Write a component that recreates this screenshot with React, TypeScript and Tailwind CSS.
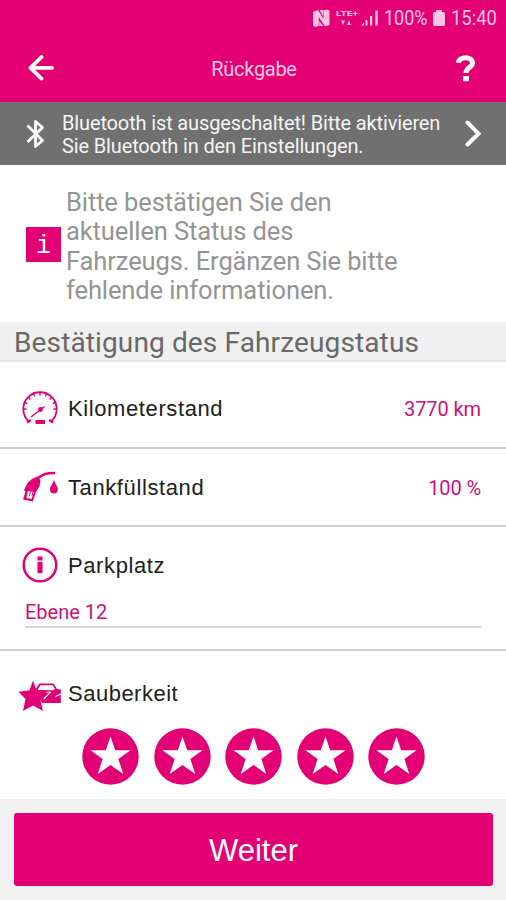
import React from 'react';

const STAR = 'M0 -20 L4.7 -6.3 L20 -6.3 L7.9 2.6 L12.8 17.5 L0 8.4 L-12.8 17.5 L-7.9 2.6 L-20 -6.3 L-4.7 -6.3 Z';

const StatusBar = () => (
  <div className="flex h-9 items-center pl-[312px] text-[#ffc4e2]">
    <svg className="h-9 w-[72px] shrink-0" viewBox="312 0 72 36" fill="currentColor">
      <path d="M313 12 L318 10 L323.5 19 V11 L327 9.5 L329.5 10.5 V25 L325 26.5 L318.7 17 V26 L315 27 L313 25.5 Z" />
      <path d="M319.5 10 H325 L323 11.5 V16 Z M319.2 21 L323.2 26 H319.2 Z" />
      <text x="336" y="15.5" fontSize="8" fontWeight="700" fontFamily="Roboto, sans-serif" textLength="22" lengthAdjust="spacingAndGlyphs">LTE+</text>
      <path d="M341 20.5 h4 l-2 4.5z M347 25 h4 l-2 -4.5z" />
      <path d="M361 25.5 L364 22.5 V25.5 Z M365.5 20 h2 v5.5 h-2z M370 16 h2.2 v9.5 h-2.2z M375.3 10.5 h2.5 v15 h-2.5z" />
    </svg>
    <span className="w-[49px] text-[20px] whitespace-nowrap"><span className="inline-block origin-left scale-x-[0.9]">100%</span></span>
    <svg className="h-9 w-3 shrink-0" viewBox="0 0 12 36" fill="currentColor">
      <path d="M3 10 H9 V12 H10.5 Q12 12 12 13.5 V24.5 Q12 26 10.5 26 H1.5 Q0 26 0 24.5 V13.5 Q0 12 1.5 12 H3 Z" />
    </svg>
    <span className="ml-[6px] text-[20px] whitespace-nowrap"><span className="inline-block origin-left scale-x-[0.92]">15:40</span></span>
  </div>
);

const GaugeIcon = () => (
  <svg className="h-9 w-9" viewBox="0 0 36 36" fill="none" stroke="currentColor">
    <path d="M7 30.5 A16.7 16.7 0 1 1 29 30.5" strokeWidth="1.8" />
    <path d="M5 31.5 L8.8 29 M27.2 29 L31 31.5" strokeWidth="2.4" />
    <path d="M1.5 18 h3 M34.5 18 h-3 M18 1.5 v3.2 M6 6 l2.4 2.4 M30 6 l-2.4 2.4 M11.5 3 l1.2 2.4 M24.5 3 l-1.2 2.4 M2.6 11.5 l2.5 1 M33.4 11.5 l-2.5 1" strokeWidth="1.4" />
    <path d="M9 26 L22.5 15.5" strokeWidth="1.4" />
    <circle cx="18.5" cy="18.5" r="2.4" fill="currentColor" stroke="none" />
    <path d="M13.5 29 h9.5 v4 h-9.5z" fill="currentColor" stroke="none" />
  </svg>
);

const FuelIcon = () => (
  <svg className="h-9 w-9" viewBox="0 0 36 36" fill="currentColor">
    <path d="M15 10 C21 5.5 23 4 33 4" fill="none" stroke="currentColor" strokeWidth="2.6" />
    <path d="M15 7.5 L18.5 11 L17.5 17.5 L14 23 L10.8 32.5 L1 30.5 L3.5 22.5 L2 21 L5.5 14 L10 10 Z" />
    <path d="M6 22 L12 23 L9.5 30 L4.3 29 Z" fill="white" />
    <path d="M8.5 22.5 L7.4 27 M11 23 L10 27" stroke="currentColor" strokeWidth="1" />
    <path d="M32 10.5 C33 15 35.8 17 35.8 20.5 A3.9 3.9 0 0 1 28 20.5 C28 17 31 15 32 10.5 Z" />
  </svg>
);

const InfoIcon = () => (
  <svg className="h-9 w-9" viewBox="0 0 36 36" fill="currentColor">
    <circle cx="18" cy="18" r="16.3" fill="none" stroke="currentColor" strokeWidth="2.5" />
    <path d="M15.5 9.5 h5 v4 h-5z M15.5 14.7 h5 v11.5 h-5z" />
  </svg>
);

const CleanIcon = () => (
  <svg className="h-9 w-[43px]" viewBox="0 0 43 36" fill="currentColor">
    <path d="M18 9.5 L21.5 4.5 H35.5 L39 10 L42.8 10.5 V24 H24 L19 15 Z" />
    <path d="M20 10 L22.5 6.3 H34.5 L37 10 L35 11.2 H20 Z" fill="white" />
    <path d="M25.5 20 L32.5 13.3 H28" fill="none" stroke="white" strokeWidth="1.1" />
    <path d="M37.5 17.5 L42.8 15" fill="none" stroke="white" strokeWidth="1.1" />
    <path d="M15 1.5 L18.5 11 L30 11.5 L22 19.5 L25 32 L15 26.5 L5 32 L7.5 20 L0.5 12.7 L11.5 11.2 Z" />
  </svg>
);

const rows = [
  { icon: GaugeIcon, label: 'Kilometerstand', value: '3770 km', height: 'h-[87px] pt-[8px]' },
  { icon: FuelIcon, label: 'Tankfüllstand', value: '100 %', height: 'h-[78px]' }
];

const App = () => {
  return (
    <main className="flex h-[900px] w-[506px] flex-col overflow-hidden bg-white font-['Roboto',sans-serif]">
      <header className="h-[102px] shrink-0 bg-[#e20074]">
        <StatusBar />
        <div className="flex h-16 items-center justify-between pr-[30px] pl-7">
          <svg className="h-7 w-[27px]" viewBox="0 0 27 28" fill="none" stroke="white" strokeWidth="3.8" strokeLinecap="round" strokeLinejoin="round">
            <path d="M13.5 3 L2.5 13.8 L13.5 24.6 M3 13.8 H24" />
          </svg>
          <h1 className="mt-[2px] mr-[3px] text-[20px] tracking-[-0.3px] text-[#ffc8e3]">Rückgabe</h1>
          <svg className="h-7 w-5" viewBox="0 0 20 28" fill="none" stroke="white">
            <path d="M2.5 8.8 C3 2 16.5 1.8 16.5 9 C16.5 13.5 10 13 10 19" strokeWidth="5" />
            <path d="M7 22 h6 v5.2 h-6z" fill="white" stroke="none" />
          </svg>
        </div>
      </header>

      <section className="flex h-[63px] shrink-0 items-center bg-[#707070] text-white">
        <svg className="ml-[26px] h-8 w-[19px]" viewBox="0 0 19 32" fill="none" stroke="white" strokeWidth="2.8" strokeLinejoin="round">
          <path d="M1.5 7.5 L16.5 22.5 L9.5 28.5 V3.5 L16.5 9.5 L1.5 24" />
        </svg>
        <p className="mt-[3px] ml-[17px] w-[400px] text-[20px] leading-[23px] tracking-[-0.14px] whitespace-nowrap text-[#f5f5f5]">
          Bluetooth ist ausgeschaltet! Bitte aktivieren<br />Sie Bluetooth in den Einstellungen.
        </p>
        <svg className="ml-[2px] h-7 w-[18px]" viewBox="0 0 18 28" fill="none" stroke="white" strokeWidth="4" strokeLinecap="round">
          <path d="M3.5 2.5 L14.5 13.7 L3.5 24.5" />
        </svg>
      </section>

      <section className="flex h-[157px] shrink-0 items-center pt-[2px] pl-[26px]">
        <span className="flex h-[35px] w-[35px] items-center justify-center bg-[#e20074] pt-[4px] font-['Liberation_Mono',monospace] text-[25px] text-white">i</span>
        <p className="mt-[4px] ml-[5px] text-[25.5px] leading-[29.5px] tracking-[-0.1px] whitespace-nowrap text-[#949494]">
          Bitte bestätigen Sie den<br />aktuellen Status des<br />Fahrzeugs. Ergänzen Sie bitte<br />fehlende informationen.
        </p>
      </section>

      <h2 className="flex h-10 shrink-0 items-center border-b-2 border-[#e6e6e6] bg-[#f0f0f0] pt-[4px] pl-[14px] text-[28px] tracking-[0.13px] text-[#686868]">
        Bestätigung des Fahrzeugstatus
      </h2>

      {rows.map((row) => {
        const Icon = row.icon;
        return (
          <div key={row.label} className={`flex shrink-0 items-center border-b-2 border-[#cfcfcf] pr-[25px] pl-[22px] text-[#e20074] ${row.height}`}>
            <Icon />
            <span className="ml-[10px] font-['Liberation_Sans',sans-serif] text-[22px] tracking-[0.6px] text-[#202020]">{row.label}</span>
            <span className="mt-[1px] ml-auto text-[20px] tracking-[-0.1px] text-[#c7127a]">{row.value}</span>
          </div>
        );
      })}

      <section className="h-[124px] shrink-0 border-b-2 border-[#cfcfcf] pt-5 pr-[25px] pl-[22px] text-[#e20074]">
        <div className="flex h-9 items-center">
          <InfoIcon />
          <span className="ml-[10px] font-['Liberation_Sans',sans-serif] text-[22px] tracking-[0.6px] text-[#202020]">Parkplatz</span>
        </div>
        <div className="mt-[15px] ml-[3px] h-[30px] border-b-2 border-[#d5d5d5] text-[20px] leading-[28px] text-[#c7127a]">Ebene 12</div>
      </section>

      <section className="h-[148px] shrink-0 pt-[28px] text-[#e20074]">
        <div className="flex h-9 items-center pl-[18px]">
          <CleanIcon />
          <span className="ml-[7px] pb-[8px] font-['Liberation_Sans',sans-serif] text-[22px] tracking-[0.5px] text-[#202020]">Sauberkeit</span>
        </div>
        <div className="mt-[13px] flex gap-[14.5px] pl-[82px]">
          {[1, 2, 3, 4, 5].map((star) => (
            <svg key={star} className="h-[57px] w-[57px]" viewBox="-28.5 -28.5 57 57">
              <circle r="28.2" fill="#e20074" />
              <path d={STAR} fill="white" />
            </svg>
          ))}
        </div>
      </section>

      <footer className="h-[101px] shrink-0 bg-[#f1f1f1] pt-[14px] pr-[13px] pl-[14px]">
        <button className="h-[73px] w-full rounded-[3px] bg-[#e20074] pt-[3px] font-['Liberation_Sans',sans-serif] text-[31px] text-white">Weiter</button>
      </footer>
    </main>
  );
};

export default App;
